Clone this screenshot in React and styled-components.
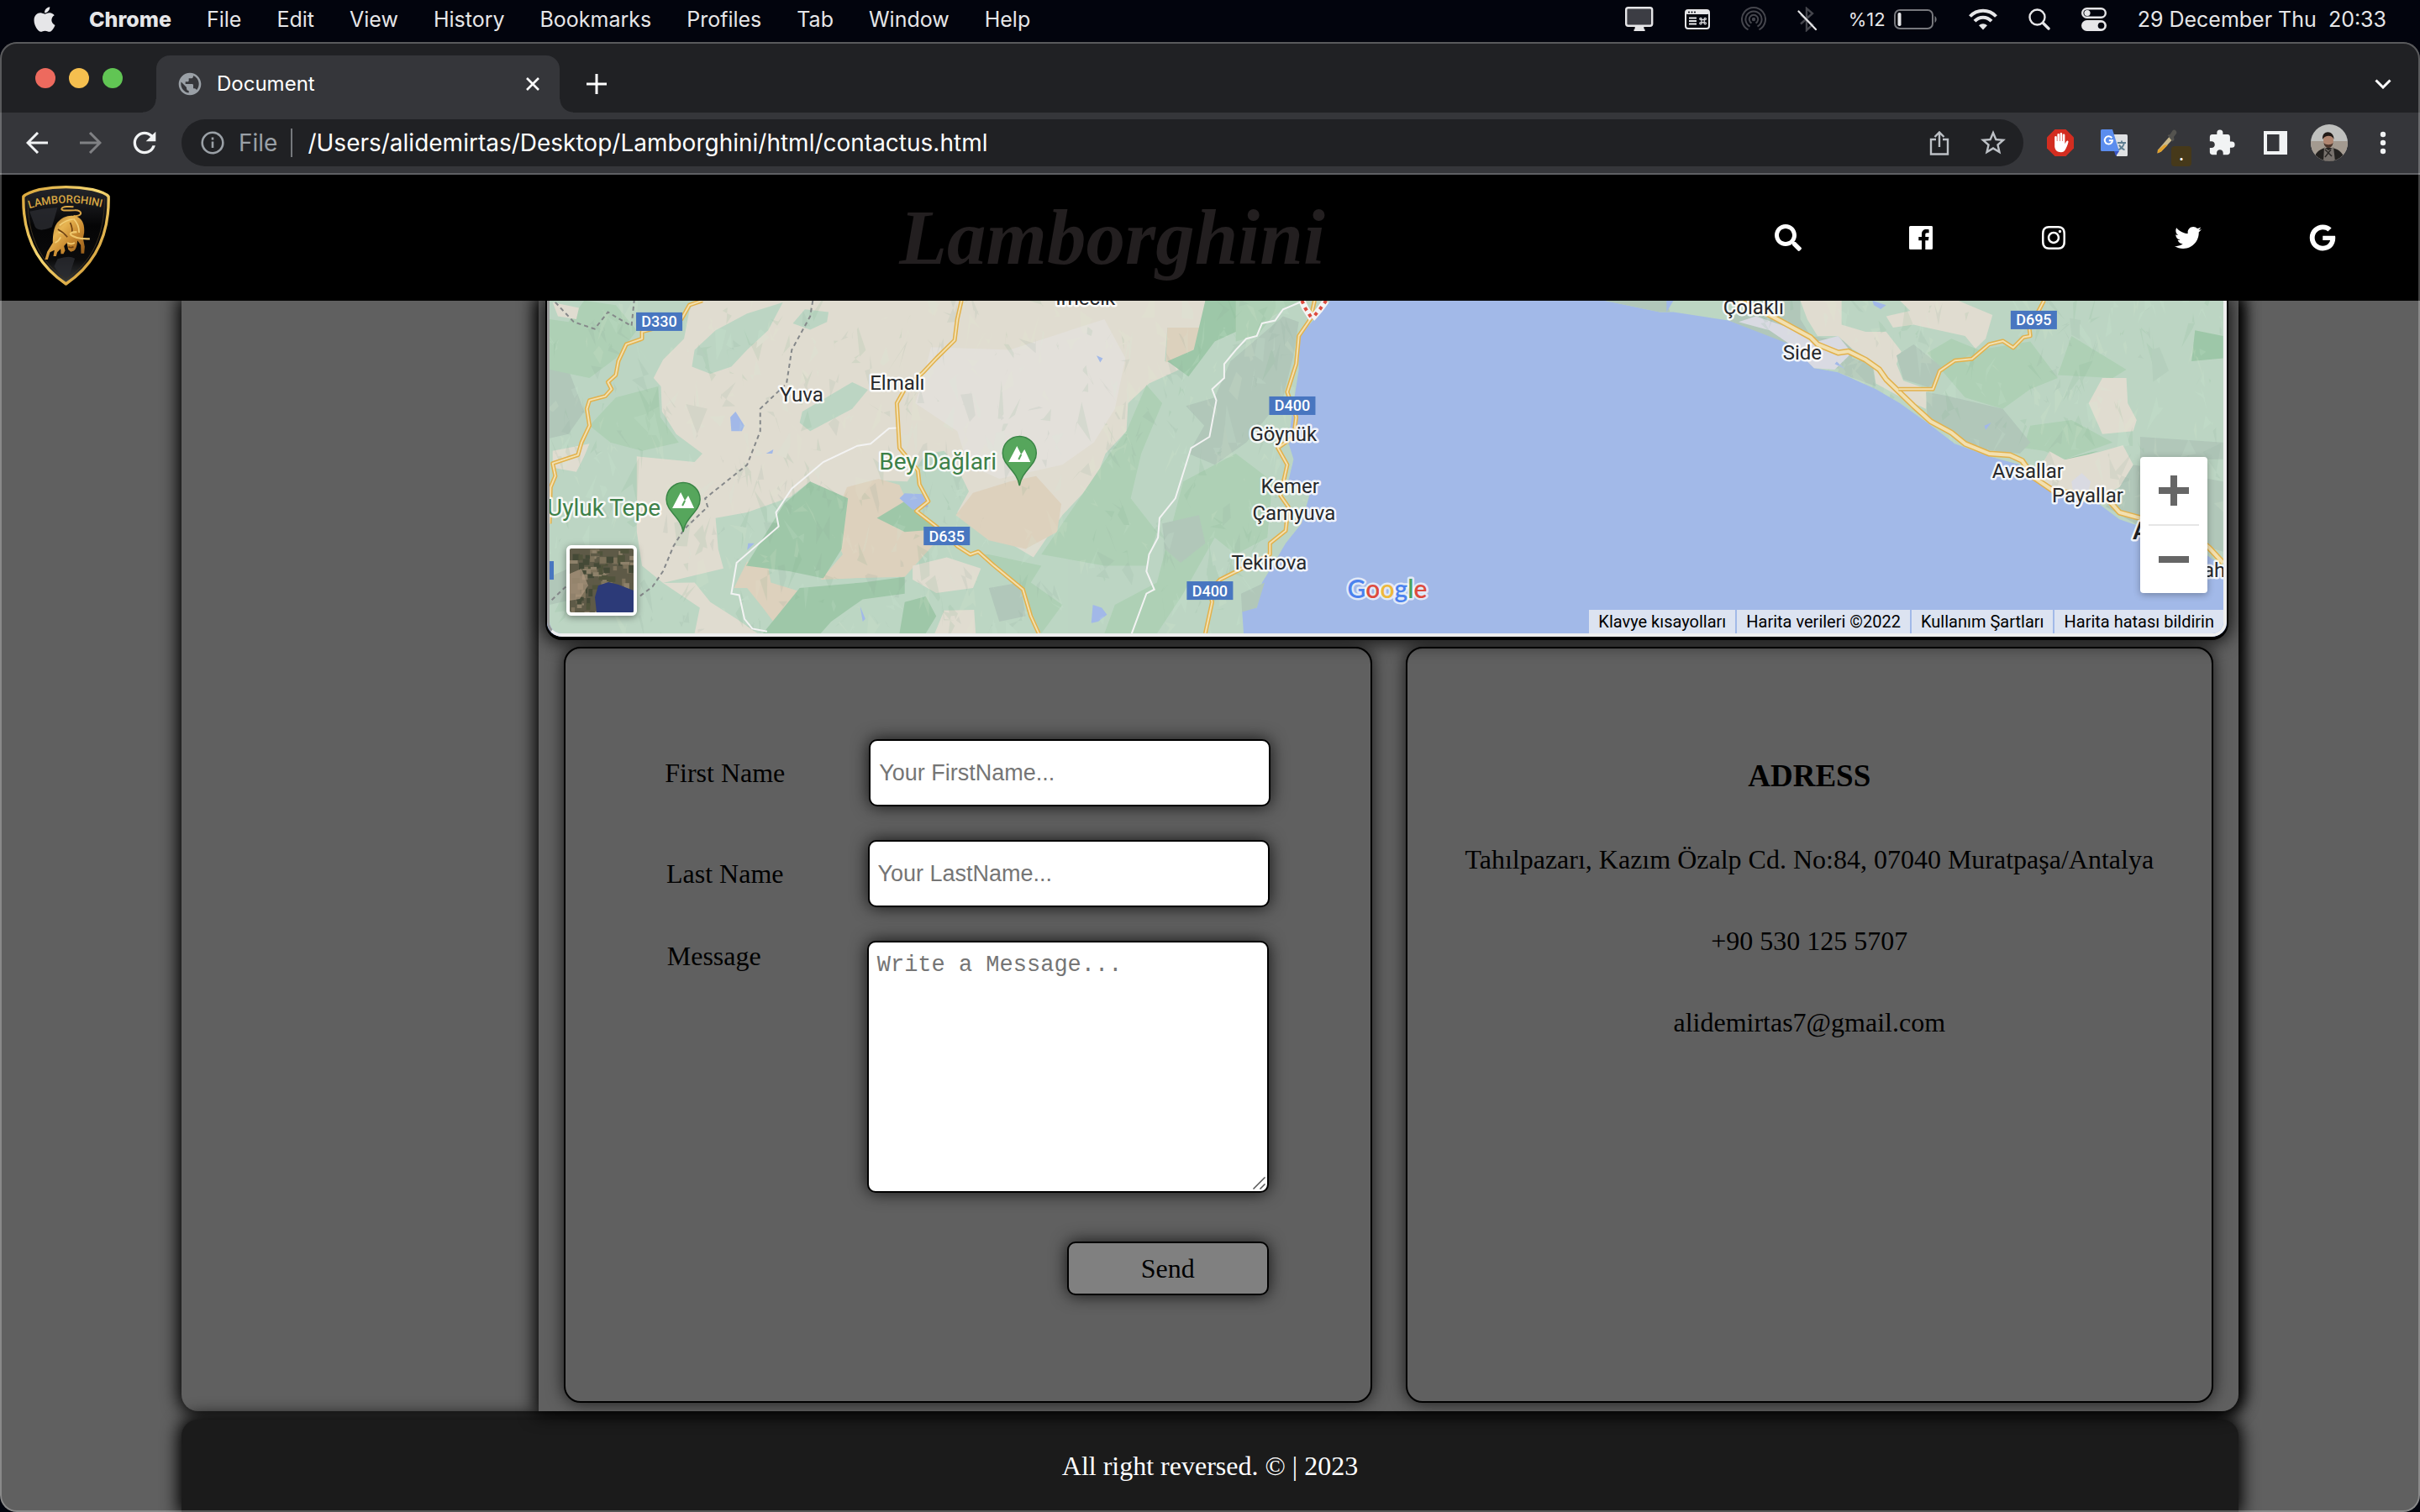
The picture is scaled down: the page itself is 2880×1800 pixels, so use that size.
import React from "react";
import styled, { createGlobalStyle, css } from "styled-components";
import { FaSearch, FaInstagram, FaTwitter, FaGoogle, FaApple, FaHandPaper } from "react-icons/fa";
import { MdExtension, MdStarBorder, MdPublic, MdRefresh } from "react-icons/md";

const ui = `Inter, "Noto Sans", sans-serif`;
const serif = `"Liberation Serif", "Times New Roman", serif`;

const GlobalStyle = createGlobalStyle`
  * { box-sizing: border-box; }
  body { margin: 0; background: #02040d; font-family: ${serif}; }
  button { border: 0; padding: 0; margin: 0; background: none; color: inherit; font: inherit; cursor: pointer; }
  a { color: inherit; text-decoration: none; }
  p, h1, h3 { margin: 0; }
  svg { display: block; }
`;

/* ---------- desktop ---------- */
const Desktop = styled.div`
  min-height: 100vh;
  display: flex;
  flex-direction: column;
  overflow: hidden;
`;
const MenuBar = styled.div`
  height: 50px;
  padding: 0 40px 4px 36px;
  display: flex;
  align-items: center;
  justify-content: space-between;
  color: #e6e6e8;
  font: 500 25px/30px ${ui};
`;
const Menus = styled.nav`
  display: flex;
  align-items: center;
  gap: 42px;
`;
const AppleMenu = styled.button`
  margin-right: -6px;
`;
const MenuItem = styled.button`
  white-space: nowrap;
  font-weight: ${(p) => (p.$strong ? 800 : 400)};
`;
const Status = styled.div`
  display: flex;
  align-items: center;
  gap: 37px;
`;
const StatusButton = styled.button`
  display: flex;
  align-items: center;
  gap: 10px;
  font-size: ${(p) => (p.$small ? "22px" : "25px")};
  font-weight: 400;
  white-space: pre;
`;

/* ---------- browser window ---------- */
const Browser = styled.div`
  position: relative;
  flex: 1;
  display: flex;
  flex-direction: column;
  border-radius: 20px;
  overflow: hidden;
  background: #606060;
  &::after {
    content: "";
    position: absolute;
    inset: 0;
    z-index: 5;
    border: 2px solid rgba(255, 255, 255, 0.26);
    border-radius: 20px;
    pointer-events: none;
  }
`;
const TabStrip = styled.div`
  height: 84px;
  padding: 0 34px 0 42px;
  display: flex;
  background: #202124;
  color: #fff;
`;
const Lights = styled.div`
  display: flex;
  gap: 16px;
  padding: 31px 40px 0 0;
`;
const Light = styled.button`
  width: 24px;
  height: 24px;
  border-radius: 50%;
  background: ${(p) => p.$color};
`;
const Tab = styled.div`
  position: relative;
  width: 480px;
  height: 68px;
  margin-top: 16px;
  padding: 0 24px 0 24px;
  display: flex;
  align-items: center;
  gap: 16px;
  border-radius: 16px 16px 0 0;
  background: #35363a;
  font: 400 24px/30px ${ui};
  &::before,
  &::after {
    content: "";
    position: absolute;
    bottom: 0;
    width: 16px;
    height: 16px;
  }
  &::before {
    left: -16px;
    background: radial-gradient(circle at 0 0, transparent 15px, #35363a 16px);
  }
  &::after {
    right: -16px;
    background: radial-gradient(circle at 100% 0, transparent 15px, #35363a 16px);
  }
`;
const TabTitle = styled.span`
  flex: 1;
`;
const StripButton = styled.button`
  display: grid;
  place-items: center;
  align-self: flex-start;
  height: 64px;
  margin: 18px 0 0 ${(p) => (p.$end ? "auto" : "32px")};
`;
const Toolbar = styled.div`
  height: 74px;
  padding: 0 12px;
  display: flex;
  align-items: center;
  background: #35363a;
  border-bottom: 2px solid #5f6064;
`;
const Tool = styled.button`
  position: relative;
  width: 64px;
  height: 56px;
  display: grid;
  place-items: center;
  color: ${(p) => (p.$dim ? "#808184" : "#f1f3f4")};
`;
const Address = styled.div`
  flex: 1;
  height: 56px;
  margin: 0 12px;
  padding: 0 20px 0 22px;
  display: flex;
  align-items: center;
  border-radius: 28px;
  background: #202124;
  color: #9aa0a6;
  font: 400 28px/34px ${ui};
`;
const Scheme = styled.label`
  padding: 0 16px;
`;
const UrlInput = styled.input`
  flex: 1;
  min-width: 0;
  height: 34px;
  padding: 0 0 0 18px;
  border: 0;
  border-left: 2px solid #75787c;
  background: none;
  color: #fff;
  font: inherit;
  outline: 0;
`;
const PillTool = styled.button`
  width: 64px;
  display: grid;
  place-items: center;
  color: #bdc1c6;
  &:last-child { margin-right: -16px; }
`;
const Badge = styled.span`
  position: absolute;
  right: 4px;
  bottom: 0;
  width: 24px;
  height: 24px;
  border-radius: 4px;
  background: #46391a;
  color: #fff;
  font: 700 18px/22px ${ui};
`;

/* ---------- page ---------- */
const Header = styled.header`
  position: relative;
  z-index: 3;
  height: 150px;
  padding-right: 100px;
  display: grid;
  grid-template-columns: 385fr 615fr;
  align-items: center;
  background: #000;
`;
const Crest = styled.a`
  padding: 0 0 6px 24px;
`;
const Brand = styled.div`
  display: flex;
  align-items: center;
  justify-content: space-between;
`;
const Wordmark = styled.h1`
  color: #231f20;
  font: italic 700 93px/120px ${serif};
`;
const Social = styled.nav`
  display: flex;
  align-items: center;
  gap: 128px;
  color: #fff;
`;
const Columns = styled.div`
  flex: none;
  display: grid;
  grid-template-columns: 425fr 2023fr;
  width: 85%;
  margin: 0 auto;
  border-radius: 0 0 20px 20px;
  box-shadow: 0 0 20px 4px #000;
`;
const Aside = styled.aside`
  border-radius: 0 0 0 20px;
`;
const Main = styled.main`
  position: relative;
  z-index: 1;
  padding: 0 12px 10px 8px;
  border-radius: 0 0 20px 0;
  background: #606060;
  box-shadow: 0 0 20px 4px #000;
`;
const MapFrame = styled.section`
  position: relative;
  overflow: hidden;
  border: solid #000;
  border-width: 0 2px 4px;
  border-radius: 0 0 20px 20px;
  background: #a2b9e8;
  box-shadow: 0 0 20px 4px rgba(0, 0, 0, 0.75);
`;
const MapInner = styled.div`
  position: relative;
  height: 400px;
  overflow: hidden;
  border: solid #eeeeee;
  border-width: 0 4px 4px 3px;
  border-left-color: #9a9a9a;
  border-radius: 0 0 18px 18px;
  svg.map { width: 100%; height: 396px; }
`;
const Thumb = styled.button`
  position: absolute;
  left: 20px;
  bottom: 21px;
  width: 84px;
  height: 84px;
  border: 4px solid #fff;
  border-radius: 6px;
  overflow: hidden;
  box-shadow: 0 2px 8px rgba(0, 0, 0, 0.4);
`;
const ZoomBox = styled.div`
  position: absolute;
  right: 19px;
  bottom: 48px;
  width: 80px;
  padding: 0 10px;
  border-radius: 4px;
  background: #fff;
  box-shadow: 0 2px 8px rgba(0, 0, 0, 0.3);
`;
const ZoomButton = styled.button`
  display: grid;
  place-items: center;
  width: 60px;
  height: 80px;
  & + & {
    height: 82px;
    border-top: 2px solid #e6e6e6;
  }
`;
const Terms = styled.div`
  position: absolute;
  right: 0;
  bottom: 0;
  display: flex;
  gap: 2px;
  font: 400 20px/28px Roboto, sans-serif;
  color: #000;
  a {
    padding: 0 11px;
    background: rgba(245, 245, 245, 0.7);
  }
`;
const Cards = styled.div`
  display: grid;
  grid-template-columns: 1fr 1fr;
  gap: 40px;
  padding: 8px 18px 0 22px;
`;
const card = css`
  border: 2px solid #000;
  border-radius: 20px;
  background: #606060;
  box-shadow: 0 0 20px rgba(0, 0, 0, 0.75);
  font: 400 32px/37px ${serif};
  color: #000;
`;
const FormCard = styled.form`
  ${card}
  padding: 108px 0 126px;
  display: flex;
  flex-direction: column;
  align-items: center;
  gap: 40px;
`;
const Row = styled.div`
  display: flex;
  align-items: ${(p) => (p.$top ? "flex-start" : "center")};
  gap: 100px;
`;
const Label = styled.label`
  min-width: 138px;
`;
const field = css`
  display: block;
  width: 478px;
  border: 2px solid #000;
  border-radius: 10px;
  background: #fff;
  box-shadow: 0 0 20px rgba(0, 0, 0, 0.8);
  outline: 0;
  &::placeholder { color: #757575; opacity: 1; }
`;
const TextField = styled.input`
  ${field}
  height: 80px;
  padding: 10px;
  font: 400 27px/31px "Liberation Sans", Arial, sans-serif;
`;
const MessageBox = styled.div`
  position: relative;
`;
const MessageField = styled.textarea`
  ${field}
  height: 300px;
  padding: 12px 10px;
  resize: none;
  font: 400 27px/31px "Liberation Mono", "Courier New", monospace;
`;
const Grip = styled.svg`
  position: absolute;
  right: 4px;
  bottom: 4px;
`;
const Actions = styled.div`
  width: 716px;
  padding-top: 18px;
  display: flex;
  justify-content: flex-end;
`;
const SendButton = styled.button`
  width: 240px;
  height: 64px;
  border: 2px solid #000;
  border-radius: 10px;
  background: #808080;
  box-shadow: 0 0 20px rgba(0, 0, 0, 0.8);
`;
const AddressCard = styled.section`
  ${card}
  padding-top: 130px;
  display: flex;
  flex-direction: column;
  align-items: center;
  gap: 60px;
  h3 { font-size: 37px; line-height: 43px; }
`;
const Footer = styled.footer`
  flex: 1;
  width: 85%;
  min-height: 110px;
  margin: 10px auto 0;
  display: grid;
  place-items: center;
  border-radius: 20px 20px 0 0;
  background: #1b1b1b;
  box-shadow: 0 0 20px 4px #000;
  color: #fff;
  font: 400 32px/37px ${serif};
`;

/* ---------- drawings ---------- */
const MonitorIcon = () => (
  <svg width="34" height="30" viewBox="0 0 34 30">
    <rect x="1.2" y="1.2" width="31" height="21.6" rx="2.5" fill="#3c3d44" stroke="#e6e6e8" strokeWidth="2.4" />
    <path d="M12 23h10l.8 4h.8v2H10.500v-2h.8z" fill="#e6e6e8" />
  </svg>
);
const ShortcutIcon = () => (
  <svg width="30" height="24" viewBox="0 0 30 24">
    <rect x="1" y="1" width="28" height="22" rx="3" fill="#02040d" stroke="#e6e6e8" strokeWidth="2" />
    <rect x="1" y="1" width="28" height="5" rx="2" fill="#e6e6e8" />
    <g fill="#02040d"><circle cx="5" cy="3.500" r="1" /><circle cx="8.500" cy="3.500" r="1" /><circle cx="12" cy="3.500" r="1" /></g>
    <path d="M5 10.500h9M5 14h9M5 17.500h9" stroke="#e6e6e8" strokeWidth="1.800" />
    <g fill="none" stroke="#e6e6e8" strokeWidth="1.200"><rect x="20" y="12.500" width="3.200" height="3.200" /><circle cx="19" cy="11.500" r="1.200" /><circle cx="24.200" cy="11.500" r="1.200" /><circle cx="19" cy="16.700" r="1.200" /><circle cx="24.200" cy="16.700" r="1.200" /></g>
  </svg>
);
const AirdropIcon = () => (
  <svg width="30" height="30" viewBox="0 0 30 30" fill="none" stroke="#45464d" strokeWidth="2">
    <circle cx="15" cy="15" r="2.200" fill="#45464d" stroke="none" />
    <path d="M12.500 19.500a5.200 5.200 0 1 1 5 0M10.500 23.500a9.600 9.600 0 1 1 9 0M8.500 27.400a14 14 0 1 1 13 0" />
  </svg>
);
const BluetoothOffIcon = () => (
  <svg width="24" height="30" viewBox="0 0 24 30" fill="none">
    <path d="M4 20.500 18 8l-7-6v26l7-6.500L4 9.500" stroke="#45464d" strokeWidth="2.400" />
    <path d="M1.500 5.500 22 27" stroke="#e6e6e8" strokeWidth="2.200" strokeLinecap="round" />
  </svg>
);
const BatteryIcon = () => (
  <svg width="52" height="24" viewBox="0 0 52 24">
    <rect x="1" y="1" width="45" height="22" rx="6" fill="none" stroke="#77787d" strokeWidth="2" />
    <rect x="4.500" y="4" width="4" height="16" rx="1.800" fill="#e6e6e8" />
    <path d="M48.500 8c2.800 1.500 2.800 6.500 0 8z" fill="#77787d" />
  </svg>
);
const WifiIcon = () => (
  <svg width="34" height="26" viewBox="0 0 34 26" fill="none" stroke="#e6e6e8" strokeWidth="4">
    <path d="M1.500 9.500c8.500-9 22.500-9 31 0M7 15.200c5.500-6 14.500-6 20 0" />
    <path d="M17 25.500l-5-5.200c2.700-2.700 7.300-2.700 10 0z" fill="#e6e6e8" stroke="none" />
  </svg>
);
const LensIcon = () => (
  <svg width="26" height="26" viewBox="0 0 26 26" fill="none" stroke="#e6e6e8" strokeLinecap="round">
    <circle cx="10.500" cy="10.500" r="9" strokeWidth="2.400" /><path d="M17.500 17.500 24 24" strokeWidth="3.400" />
  </svg>
);
const ControlIcon = () => (
  <svg width="30" height="28" viewBox="0 0 30 28">
    <rect x="1.200" y="1.200" width="27.600" height="10.600" rx="5.300" fill="none" stroke="#e6e6e8" strokeWidth="2.400" />
    <circle cx="7" cy="6.500" r="3.600" fill="#e6e6e8" />
    <rect x="0" y="15" width="30" height="13" rx="6.500" fill="#e6e6e8" /><circle cx="23.500" cy="21.500" r="3.800" fill="#02040d" />
  </svg>
);
const Stroke = ({ w, h, d, sw = 3, color = "currentColor" }) => (
  <svg width={w} height={h} viewBox={`0 0 ${w} ${h}`} fill="none" stroke={color} strokeWidth={sw}><path d={d} /></svg>
);
const InfoIcon = () => (
  <svg width="30" height="30" viewBox="0 0 30 30" fill="none" stroke="currentColor" strokeWidth="2.600">
    <circle cx="15" cy="15" r="12.300" /><path d="M15 13.500v7.500M15 8.500v3" />
  </svg>
);
const BlockerIcon = () => (
  <svg width="32" height="32" viewBox="0 0 32 32">
    <path d="M9.500 0h13L32 9.500v13L22.500 32h-13L0 22.500v-13z" fill="#d32d20" />
    <path d="M9.200 16.500V9.200a1.300 1.300 0 0 1 2.600 0V14h.6V6.200a1.300 1.300 0 0 1 2.600 0V14h.6V5.200a1.300 1.300 0 0 1 2.600 0V14h.6V6.700a1.300 1.300 0 0 1 2.600 0v10.500l1.800-3c.8-1.300 2.600-.6 2.300.8-.8 4-2.500 7-3.700 9.300-1 2-2.500 2.900-5 2.900-4.500 0-7.200-2.500-7.600-6.700z" fill="#fff" />
  </svg>
);
const TranslateIcon = () => (
  <svg width="32" height="32" viewBox="0 0 32 32">
    <path d="M13 6h17.500a1.500 1.500 0 0 1 1.500 1.500v23a1.500 1.500 0 0 1-1.500 1.500H19z" fill="#dfe1e3" />
    <path d="M20 16h10M25 13.500V16M28 16c-.8 4-4 7-7 8.500M22 18.500c1.500 3 4 5 6.500 6" stroke="#5f7f92" strokeWidth="1.800" fill="none" />
    <path d="M1.500 0H14l8 26H1.500A1.500 1.500 0 0 1 0 24.500v-23A1.500 1.500 0 0 1 1.500 0z" fill="#5b8dee" />
    <path d="M16 26h6l-4 6z" fill="#3a55c4" />
    <path d="M13.300 10.400A4.600 4.600 0 1 0 14 13.300H9.800" stroke="#fff" strokeWidth="2" fill="none" />
  </svg>
);
const DropperIcon = () => (
  <svg width="32" height="32" viewBox="0 0 32 32">
    <path d="M17.500 9 21 12.500 8 26.500l-4.500 2 .5-4z" fill="#c9b98c" /><path d="M12 18.500h4L8 26.500l-4.500 2 .5-4z" fill="#e0a02c" />
    <path d="M15.500 7l3-1 3-4.500c2-2.500 6 .5 4.500 3.500l-3 4 .5 3.500-2 2z" fill="#54534f" />
  </svg>
);
const PanelIcon = () => (
  <svg width="28" height="28" viewBox="0 0 28 28"><path fillRule="evenodd" d="M0 0h28v28H0zM4 4v20h14.500V4z" fill="#f1f3f4" /></svg>
);
const Avatar = () => (
  <svg width="44" height="44" viewBox="0 0 44 44">
    <clipPath id="face"><circle cx="22" cy="22" r="22" /></clipPath>
    <g clipPath="url(#face)">
      <rect width="44" height="44" fill="#bfc0be" /><path d="M0 20h44v24H0z" fill="#a39a90" />
      <path d="M4 44c0-10 6-14 13-16h9c8 2 14 7 14 16z" fill="#23211f" />
      <path d="M16 27l5 4 6-4 2 17H15z" fill="#77716c" /><path d="M17 30l8 8M24 30l-7 9" stroke="#2b2826" strokeWidth="1.500" />
      <ellipse cx="21" cy="19" rx="6" ry="8.500" fill="#b08570" /><path d="M14 18c-1-12 14-11 13.500 0-1.500-5-10-6-13.500 0z" fill="#211a17" />
      <path d="M15.500 22c1 8 10 8 11 0-2 3-9 3-11 0z" fill="#4a342b" />
    </g>
  </svg>
);
const FacebookIcon = () => (
  <svg width="28" height="28" viewBox="0 0 28 28">
    <path fill="#fff" fillRule="evenodd" d="M1.500 0h25A1.500 1.500 0 0 1 28 1.500v25a1.500 1.500 0 0 1-1.500 1.500h-7.200V17.200h3.600l.6-4.300h-4.200v-2.700c0-1.200.4-2 2.100-2h2.200V4.300c-.4 0-1.700-.2-3.200-.2-3.200 0-5.400 2-5.400 5.600v3.200h-3.700v4.300h3.700V28H1.500A1.500 1.500 0 0 1 0 26.500v-25A1.500 1.500 0 0 1 1.500 0z" />
  </svg>
);
const CrestIcon = () => (
  <svg width="109" height="122" viewBox="72 52 326 366">
    <defs>
      <linearGradient id="gold" x1="0" y1="0" x2="1" y2="1"><stop offset="0" stopColor="#d9a53a" /><stop offset=".45" stopColor="#f6d873" /><stop offset="1" stopColor="#c98a25" /></linearGradient>
      <linearGradient id="hide" x1="0" y1="0" x2="1" y2="1"><stop offset="0" stopColor="#8a5518" /><stop offset=".35" stopColor="#e8b552" /><stop offset=".6" stopColor="#c98a30" /><stop offset="1" stopColor="#8a5014" /></linearGradient>
      <linearGradient id="field" x1="0" y1="0" x2="0" y2="1"><stop offset="0" stopColor="#25262b" /><stop offset=".4" stopColor="#050506" /><stop offset=".75" stopColor="#0a0a0b" /><stop offset="1" stopColor="#3a3d40" /></linearGradient>
      <path id="arc" d="M104 140Q235 100 380 140" />
    </defs>
    <path d="M83 97Q95 84 140 72Q235 54 330 72Q378 84 387 97C390 250 330 345 235 409C140 345 80 250 83 97z" fill="url(#field)" stroke="url(#gold)" strokeWidth="10" strokeLinejoin="round" />
    <path d="M98 104C98 240 145 335 235 392C325 335 372 240 373 104" fill="none" stroke="#3a3020" strokeWidth="3" />
    <path d="M105 150q50-12 100-14l-20 70q-45 20-60 0zM205 320q40-14 62-2l-20 60-12 12q-30-20-42-44z" fill="#2a2c31" opacity=".8" />
    <text fill="#d8a743" fontFamily="Roboto, sans-serif" fontSize="39" fontWeight="500"><textPath href="#arc">LAMBORGHINI</textPath></text>
    <path d="M262 166c34 4 34-22 4-20-22 0-50 4-46-6 4-8 28-8 42-6" fill="none" stroke="#d9a445" strokeWidth="6" />
    <path d="M204 190C222 168 250 160 274 168C296 178 302 200 300 226L296 246L302 276L300 300H289L288 270L276 254C274 280 268 294 252 294L243 286L238 262L228 274L232 290L226 302H217L216 284L204 296L200 310H190L194 288L178 296L170 322H160L168 294L188 262C188 232 192 206 204 190z" fill="url(#hide)" />
    <path d="M212 200q24-20 48-22M208 226q18-4 30 14M262 176q20 20 20 50M240 262q14 8 26 0M196 262q14-6 20-20" fill="none" stroke="#f3cf76" strokeWidth="5" />
    <path d="M206 214q20 10 34 28M250 190q10 20 6 40M244 276q10 6 18 0" fill="none" stroke="#6d3f10" strokeWidth="5" />
    <path d="M250 232q20 18 70 16M250 232q4-10 24-8" fill="none" stroke="#efc66a" strokeWidth="7" />
  </svg>
);

/* ---------- map ---------- */
const rng = (seed) => () => ((seed = (seed * 16807) % 2147483647) - 1) / 2147483646;
const facets = (seed, n, x0, x1, y0, y1) => {
  const r = rng(seed);
  return Array.from({ length: n }, () => {
    const x = x0 + r() * (x1 - x0);
    const y = y0 + r() * (y1 - y0);
    const s = 8 + r() * 20;
    const pt = () => `${(x + (r() - 0.5) * s).toFixed(1)},${(y + (r() - 0.5) * s * 2).toFixed(1)}`;
    return { points: `${pt()} ${pt()} ${pt()} ${pt()}`, fill: ["#7fae8c", "#e4ecd2", "#8fa79a", "#d6efdb"][Math.floor(r() * 4)] };
  });
};
const westFacets = facets(77, 620, 655, 1560, 358, 754);
const eastFacets = facets(31, 340, 2100, 2646, 358, 700);

const beige = "#e0dcd0", light = "#bcd6c3", mid = "#aed0b5", deep = "#9ec7a8", grey = "#b1c7ba", tan = "#ddd1bd", sea = "#a2b9e8";
const west = "M24 54H1510L1480 120 1450 180 1450 300 1440 420 1430 560 1440 620 1430 700 1470 750 1455 850 1425 920 1400 1000 1380 1060 1370 1150 1342 1160 1345 1242H24z";
const westShapes = [
  [grey, "M24 240 60 300 90 450 60 530 24 545zM24 1040 60 1010 70 1120 24 1140z"],
  [mid, "M90 54 150 70 190 160 150 260 100 330 24 300 24 120 60 130zM150 400 230 360 235 470 270 560 200 590 140 560 100 500z"],
  [beige, "M300 54 1272 54 1266 150 1200 150 1195 270 1235 290 1200 320 1165 350 1125 420 1122 520 1082 600 1070 660 1040 740 1000 820 945 970 900 920 830 860 800 810 822 735 800 650 775 590 740 600 705 700 640 695 600 725 580 800 520 700 482 755 400 810 340 830 345 940 355 1010 300 1035 240 1062 200 1000 190 880 190 610 300 630 315 600 265 530 238 450 236 360 222 330 240 265 280 190 290 90z"],
  [beige, "M30 60 80 80 75 120 40 110zM30 590 100 565 90 610 75 665 30 650zM240 1062 300 1060 330 1130 380 1190 420 1242 300 1242 310 1150z"],
  ["#e3e0da", "M750 220 900 230 1080 120 1120 260 1100 440 1060 560 1000 640 880 690 820 640 800 520 720 420 735 330z"],
  [light, "M300 230 340 160 400 100 468 60 440 160 400 230 370 290 330 315 295 290zM487 135 510 85 555 95 552 130 520 158zM505 450 600 345 630 372 600 440 550 490 520 520 500 490z"],
  [tan, "M540 1050 582 960 560 860 590 720 650 690 690 712 722 850 762 910 700 1040 600 1045zM797 820 830 740 900 700 950 680 998 780 990 880 930 940 860 910zM1200 150 1266 150 1250 230 1197 275zM375 1080 400 985 440 1000 445 1060 505 1095 498 1190 460 1225 430 1150 400 1080z"],
  [deep, "M398 1000 470 780 520 700 592 760 580 940 545 1045 480 1020zM647 830 700 770 725 810 765 870 700 880zM430 1242 500 1080 620 1060 700 1040 700 1100 620 1120 560 1200 540 1242zM690 1242 700 1130 740 1110 760 1180 740 1242z"],
  [beige, "M715 1000 780 970 845 1010 830 1080 760 1098 715 1050zM757 1242 775 1160 832 1158 835 1242z"],
  [deep, "M1272 54 1400 54 1360 140 1290 200 1240 325 1200 270 1250 230z"],
  [mid, "M1160 355 1190 420 1150 600 1130 760 1180 880 1160 1000 1080 1000 960 960 1040 740 1090 600 1122 520zM1330 54 1450 54 1400 110 1370 180 1330 200z"],
  [mid, "M1230 700 1330 600 1400 700 1390 900 1330 960 1290 900 1230 1100 1180 1242 1080 1242 1100 1140 1180 1060zM860 960 960 1000 940 1060 1000 1140 960 1242 920 1080 840 960z"],
  [grey, "M1235 430 1290 400 1320 270 1420 110 1450 130 1440 250 1420 400 1350 560 1290 640 1240 600 1270 500zM1190 850 1260 820 1272 920 1225 990 1195 940zM860 1080 920 1060 930 1180 880 1200zM1340 1100 1385 1060 1370 1150 1342 1165z"],
  [sea, "M370 520 368 470 378 450 395 500 390 520zM690 760 700 742 735 745 745 790 715 800zM1055 1205 1058 1140 1075 1150 1085 1175 1068 1200zM615 1145 625 1190 620 1200zM1065 250 1077 260 1072 275zM400 945 402 920 414 920zM436 600 450 585 448 600z"],
];
const east = "M380 54 460 95 480 95 560 125 620 160 650 210 685 295 720 310 775 370 810 420 850 490 890 565 940 610 985 640 1005 690 1035 735 1070 770 1100 780 1130 835 1160 860 1250 950 1285 1010V54z";
const eastShapes = [
  [grey, "M560 125 600 54 665 54 665 120 680 180 740 200 740 300 690 290 650 210zM380 54 470 54 475 95 460 95zM725 250 770 280 775 360 720 310z"],
  ["#d9dae2", "M575 130 600 110 660 160 690 200 720 180 740 240 715 300 685 295 650 210 620 160z"],
  [beige, "M665 54 725 54 725 140 760 165 790 165 812 235 805 280 815 340 850 370 848 440 820 410 775 350 770 270 740 225 720 180 690 180 675 120zM810 54 895 54 945 105 935 190 920 225 905 180 830 140 800 150 790 110 825 90z"],
  [mid, "M870 300 850 240 885 190 925 230 1000 200 1040 330 1000 370 960 440 905 400zM990 580 1000 500 1060 480 1120 560 1050 620 1020 590zM1060 180 1140 300 1120 330 1040 320z"],
  [grey, "M805 250 830 210 870 290 858 368 815 335zM848 380 880 395 960 440 1000 560 985 600 910 580 850 480zM1150 640 1281 700 1281 950 1160 860 1110 790zM1160 540 1281 560 1281 620 1160 620z"],
  [deep, "M1240 160 1281 180 1281 260 1235 270zM1050 620 1090 595 1100 590 1060 625z"],
  [beige, "M1105 330 1140 330 1142 420 1155 480 1150 520 1105 530 1085 420zM1028 592 1050 622 1100 595 1135 570 1150 640 1130 720 1085 775 1040 735 1005 690z"],
  ["#d9dae2", "M1060 700 1075 670 1088 700 1085 730 1062 730z"],
  [sea, "M770 54 790 70 782 84 772 70zM470 54 480 54 470 95zM935 515 933 500 943 490zM715 280 718 272 730 298z"],
];
const Road = ({ d, w = 5 }) => (
  <>
    <path d={d} fill="none" stroke="#e2b14c" strokeWidth={w} vectorEffect="non-scaling-stroke" strokeLinejoin="round" />
    <path d={d} fill="none" stroke="#f2e0b0" strokeWidth={w - 3} vectorEffect="non-scaling-stroke" strokeLinejoin="round" />
  </>
);
const westRoads = [
  "M315 54 290 70 275 120 230 150 200 165 200 190 170 210 155 270 150 320 135 345 142 370 130 395 100 410 95 440 100 500 85 560 78 605 30 635 35 680 26 720 24 850",
  "M808 54 800 120 795 195 760 260 735 310 700 370 685 420 690 580 725 660 728 710 745 770 722 805 760 860 800 930 825 960 840 950 870 1000 925 1085 940 1180 955 1242",
  "M1480 54 1472 120 1450 180 1445 280 1428 380 1445 470 1440 540 1410 580 1428 640 1415 750 1430 790 1425 875 1395 920 1395 960 1300 1050 1280 1090 1285 1130 1272 1242",
];
const westLines = "M690 508 670 510 635 565 610 572 545 630 485 725 455 810 460 860 380 990 370 1100 385 1105 395 1190 410 1225 438 1235M1460 54 1420 85 1405 125 1380 135 1370 180 1350 190 1330 230 1308 280 1308 330 1285 370 1293 410 1280 540 1245 580 1215 760 1185 830 1182 900 1165 960 1160 1020 1175 1085 1160 1100 1132 1242";
const borders = "M35 60 70 130 110 155 135 95 180 145 185 54M525 54 520 110 485 230 475 350 425 440 425 520 400 640 320 760 325 790 280 870 260 930 240 1020 220 1075 195 1110M55 1075 24 1130";

const towns = [
  ["İmecik", 1257, 363], ["Elmalı", 1036, 464], ["Yuva", 929, 478], ["Göynük", 1488, 525], ["Kemer", 1501, 587],
  ["Çamyuva", 1491, 619], ["Tekirova", 1466, 678], ["Çolaklı", 2051, 374], ["Side", 2122, 428], ["Avsallar", 2371, 569], ["Payallar", 2442, 598], ["ah", 2622, 687],
];
const shields = [["D330", 758, 372], ["D400", 1511, 472], ["D635", 1100, 627], ["D400", 1413, 692], ["D695", 2393, 370], ["", 605, 668]];
const halo = { stroke: "#fff", strokeWidth: 5, strokeLinejoin: "round", paintOrder: "stroke", strokeOpacity: 0.85 };
const Pin = ({ x, y }) => (
  <g transform={`translate(${x} ${y})`}>
    <path d="M0 58C-3 40-20 34-20 19.500a20 20 0 0 1 40 0C20 34 3 40 0 58z" fill="#56a65c" stroke="#3a8546" strokeWidth="1.500" />
    <path d="M-13 30-3 11 2 21 6 15 13 30z" fill="#fff" /><path d="M2 21-1 27" stroke="#56a65c" strokeWidth="2" />
  </g>
);
const MapDrawing = () => (
  <svg className="map" viewBox="655 358 1991 396" preserveAspectRatio="xMidYMid slice" role="img" aria-label="Antalya">
    <defs>
      <clipPath id="west"><path d={west} transform="translate(640 340) scale(.625 .33333)" /></clipPath>
      <clipPath id="east"><path d={east} transform="translate(1600 340) scale(.81633 .33333)" /></clipPath>
    </defs>
    <rect x="600" y="300" width="2100" height="500" fill={sea} />
    <g transform="translate(640 340) scale(.625 .33333)">
      <path d={west} fill={light} />
      {westShapes.map(([fill, d], i) => <path key={i} d={d} fill={fill} />)}
    </g>
    <g clipPath="url(#west)" opacity=".14">{westFacets.map((f, i) => <polygon key={i} {...f} />)}</g>
    <g transform="translate(640 340) scale(.625 .33333)">
      <path d={westLines} fill="none" stroke="#f3f3f3" strokeWidth="2" vectorEffect="non-scaling-stroke" />
      <path d={borders} fill="none" stroke="#85888a" strokeWidth="2" strokeDasharray="5 4" vectorEffect="non-scaling-stroke" />
      {westRoads.map((d, i) => <Road key={i} d={d} />)}
      <path d="M1456 54 1462 80 1475 118M1502 54 1490 85 1475 118" fill="none" stroke="#f4f4f4" strokeWidth="8" vectorEffect="non-scaling-stroke" />
      <path d="M1456 54 1462 80 1475 118M1502 54 1490 85 1475 118" fill="none" stroke="#dd4b3e" strokeWidth="4" strokeDasharray="4 5" vectorEffect="non-scaling-stroke" />
    </g>
    <g transform="translate(1600 340) scale(.81633 .33333)">
      <path d={east} fill={light} />
      {eastShapes.map(([fill, d], i) => <path key={i} d={d} fill={fill} />)}
    </g>
    <g clipPath="url(#east)" opacity=".14">{eastFacets.map((f, i) => <polygon key={i} {...f} />)}</g>
    <g transform="translate(1600 340) scale(.81633 .33333)">
      <Road w={7} d="M575 54 620 105 650 145 680 185 690 210 720 240 735 235 760 265 780 300 790 335 830 430 855 485 885 525 905 565 940 600 970 605 988 625 1005 685 1035 735 1060 740 1110 755 1130 810 1160 830 1220 860 1260 935 1281 990" />
      <Road w={5} d="M808 370 858 370 868 305 890 268 915 262 940 210 960 198 975 222 990 185 1000 180 998 140 1010 100 1020 54" />
    </g>
    <g fontFamily="Roboto, sans-serif">
      <g fontSize="24" fill="#26282b" {...halo}>
        {towns.map(([name, x, y]) => <text key={name} x={x} y={y}>{name}</text>)}
      </g>
      <text x="2538" y="642" fontSize="30" fontWeight="500" fill="#202124" {...halo}>A</text>
      <g fontSize="28" fill="#3d8048" {...halo}>
        <text x="1047" y="559">Bey Dağlari</text>
        <text x="652" y="614">Uyluk Tepe</text>
      </g>
      {shields.map(([name, x, y]) => (
        <g key={name + x}>
          <rect x={x} y={y} width="55" height="22" fill="#4876c0" />
          <text x={x + 27.5} y={y + 17.500} fontSize="18" fontWeight="500" fill="#fff" textAnchor="middle">{name}</text>
        </g>
      ))}
    </g>
    <Pin x={1214} y={520} />
    <Pin x={814} y={575} />
    <text x="1604" y="712" fontFamily="Lato, sans-serif" fontSize="30" fontWeight="600" {...halo} strokeOpacity={0.7}>
      <tspan fill="#4c82ee">G</tspan><tspan fill="#dd4b3e">o</tspan><tspan fill="#eeb83c">o</tspan><tspan fill="#4c82ee">g</tspan><tspan fill="#4aa35a">l</tspan><tspan fill="#dd4b3e">e</tspan>
    </text>
  </svg>
);
const thumbFacets = (() => {
  const r = rng(9);
  return Array.from({ length: 120 }, () => ({ x: r() * 76, y: r() * 76, width: 4 + r() * 7, height: 3 + r() * 8, fill: ["#4a5037", "#8b7d64", "#3a4230", "#a3927a", "#5f5a48"][Math.floor(r() * 5)] }));
})();
const Satellite = () => (
  <svg width="76" height="76" viewBox="0 0 76 76">
    <rect width="76" height="76" fill="#5e5a48" />
    <g opacity=".7">{thumbFacets.map((f, i) => <rect key={i} {...f} />)}</g>
    <path d="M0 30 14 24 22 44 12 60 0 62z" fill="#b09a82" opacity=".7" />
    <path d="M32 76 30 58 34 44 46 40 58 43 76 50V76z" fill="#2c3a78" />
  </svg>
);

const menus = ["File", "Edit", "View", "History", "Bookmarks", "Profiles", "Tab", "Window", "Help"];

export default function App() {
  return (
    <Desktop>
      <GlobalStyle />
      <MenuBar>
        <Menus>
          <AppleMenu aria-label="Apple"><FaApple size={34} /></AppleMenu>
          <MenuItem $strong>Chrome</MenuItem>
          {menus.map((m) => <MenuItem key={m}>{m}</MenuItem>)}
        </Menus>
        <Status>
          <StatusButton aria-label="Display"><MonitorIcon /></StatusButton>
          <StatusButton aria-label="Shortcuts"><ShortcutIcon /></StatusButton>
          <StatusButton aria-label="AirDrop"><AirdropIcon /></StatusButton>
          <StatusButton aria-label="Bluetooth"><BluetoothOffIcon /></StatusButton>
          <StatusButton $small>%12<BatteryIcon /></StatusButton>
          <StatusButton aria-label="Wi-Fi"><WifiIcon /></StatusButton>
          <StatusButton aria-label="Spotlight"><LensIcon /></StatusButton>
          <StatusButton aria-label="Control Centre"><ControlIcon /></StatusButton>
          <StatusButton>29 December Thu  20:33</StatusButton>
        </Status>
      </MenuBar>

      <Browser>
        <TabStrip>
          <Lights>
            <Light $color="#ed6a5e" aria-label="Close window" />
            <Light $color="#f5bf4f" aria-label="Minimise" />
            <Light $color="#61c554" aria-label="Zoom window" />
          </Lights>
          <Tab>
            <MdPublic size={32} color="#9aa0a6" />
            <TabTitle>Document</TabTitle>
            <button aria-label="Close tab"><Stroke w={16} h={16} d="M1 1 15 15M15 1 1 15" sw={2.6} /></button>
          </Tab>
          <StripButton aria-label="New tab"><Stroke w={24} h={24} d="M12 0V24M0 12H24" /></StripButton>
          <StripButton $end aria-label="Search tabs"><Stroke w={20} h={12} d="M1.500 1.500 10 10 18.500 1.500" /></StripButton>
        </TabStrip>
        <Toolbar>
          <Tool aria-label="Back"><Stroke w={26} h={26} d="M14 1 2 13 14 25M2 13H26" /></Tool>
          <Tool $dim aria-label="Forward"><Stroke w={26} h={26} d="M12 1 24 13 12 25M24 13H0" /></Tool>
          <Tool aria-label="Reload"><MdRefresh size={40} /></Tool>
          <Address>
            <InfoIcon />
            <Scheme htmlFor="url">File</Scheme>
            <UrlInput id="url" defaultValue="/Users/alidemirtas/Desktop/Lamborghini/html/contactus.html" />
            <PillTool aria-label="Share"><Stroke w={24} h={30} d="M8 11H2V28.500H22V11H16M12 20V2.500M6.500 8 12 2.500 17.500 8" sw={2.4} /></PillTool>
            <PillTool aria-label="Bookmark"><MdStarBorder size={36} /></PillTool>
          </Address>
          <Tool aria-label="Blocker"><BlockerIcon /></Tool>
          <Tool aria-label="Translate"><TranslateIcon /></Tool>
          <Tool aria-label="Colour picker"><DropperIcon /><Badge>.</Badge></Tool>
          <Tool aria-label="Extensions"><MdExtension size={34} /></Tool>
          <Tool aria-label="Side panel"><PanelIcon /></Tool>
          <Tool aria-label="Profile"><Avatar /></Tool>
          <Tool aria-label="More">
            <svg width="8" height="28" fill="#f1f3f4"><circle cx="4" cy="4" r="3.200" /><circle cx="4" cy="14" r="3.200" /><circle cx="4" cy="24" r="3.200" /></svg>
          </Tool>
        </Toolbar>

        <Header>
          <Crest href="#" aria-label="Home"><CrestIcon /></Crest>
          <Brand>
            <Wordmark>Lamborghini</Wordmark>
            <Social>
              <a href="#" aria-label="Search"><FaSearch size={32} /></a>
              <a href="#" aria-label="Facebook"><FacebookIcon /></a>
              <a href="#" aria-label="Instagram"><FaInstagram size={32} /></a>
              <a href="#" aria-label="Twitter"><FaTwitter size={32} /></a>
              <a href="#" aria-label="Google"><FaGoogle size={32} /></a>
            </Social>
          </Brand>
        </Header>

        <Columns>
          <Aside />
          <Main>
            <MapFrame>
              <MapInner>
                <MapDrawing />
                <Thumb aria-label="Satellite"><Satellite /></Thumb>
                <ZoomBox>
                  <ZoomButton aria-label="Zoom in"><Stroke w={36} h={36} d="M18 0V36M0 18H36" sw={8} color="#666" /></ZoomButton>
                  <ZoomButton aria-label="Zoom out"><Stroke w={36} h={8} d="M0 4H36" sw={8} color="#666" /></ZoomButton>
                </ZoomBox>
                <Terms>
                  <a href="#">Klavye kısayolları</a>
                  <a href="#">Harita verileri ©2022</a>
                  <a href="#">Kullanım Şartları</a>
                  <a href="#">Harita hatası bildirin</a>
                </Terms>
              </MapInner>
            </MapFrame>
            <Cards>
              <FormCard onSubmit={(e) => e.preventDefault()}>
                <Row><Label htmlFor="first">First Name</Label><TextField id="first" placeholder="Your FirstName..." /></Row>
                <Row><Label htmlFor="last">Last Name</Label><TextField id="last" placeholder="Your LastName..." /></Row>
                <Row $top>
                  <Label htmlFor="message">Message</Label>
                  <MessageBox>
                    <MessageField id="message" placeholder="Write a Message..." />
                    <Grip width="15" height="15" viewBox="0 0 15 15" fill="none" stroke="#555" strokeWidth="1.500"><path d="M.5 14.500 14.500.5M8.500 14.500l6-6" /></Grip>
                  </MessageBox>
                </Row>
                <Actions><SendButton type="submit">Send</SendButton></Actions>
              </FormCard>
              <AddressCard>
                <h3>ADRESS</h3>
                <p>Tahılpazarı, Kazım Özalp Cd. No:84, 07040 Muratpaşa/Antalya</p>
                <p>+90 530 125 5707</p>
                <p>alidemirtas7@gmail.com</p>
              </AddressCard>
            </Cards>
          </Main>
        </Columns>
        <Footer>All right reversed. © | 2023</Footer>
      </Browser>
    </Desktop>
  );
}
